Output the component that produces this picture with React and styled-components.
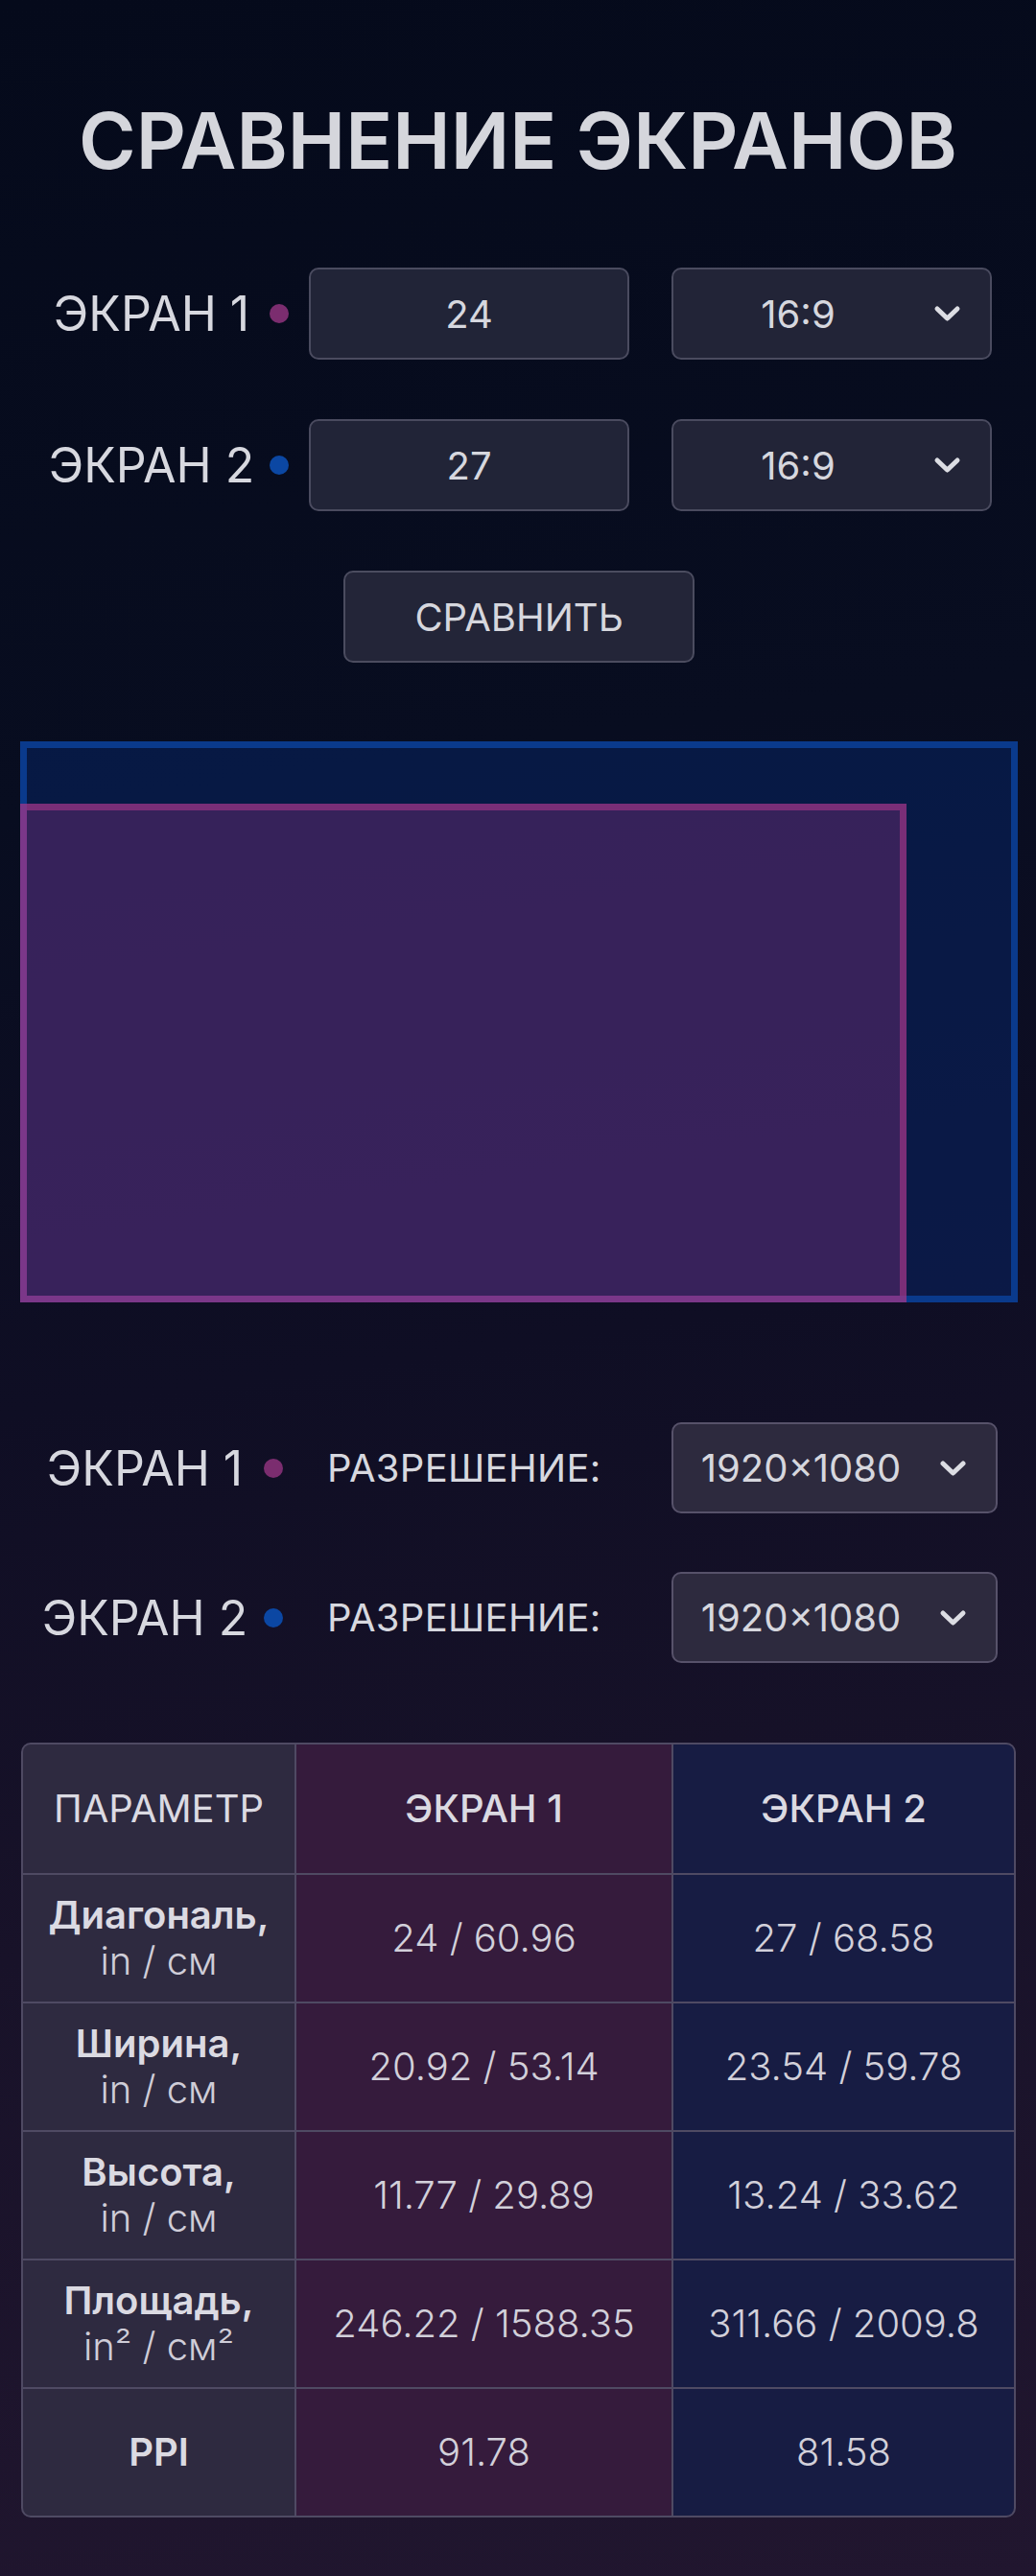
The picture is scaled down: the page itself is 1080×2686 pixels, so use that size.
import React from "react";
import styled, { createGlobalStyle } from "styled-components";

const GlobalStyle = createGlobalStyle`
  html, body {
    margin: 0;
    padding: 0;
  }
  body {
    background: #080c1f;
    font-family: Inter, "Noto Sans", "Liberation Sans", sans-serif;
    color: #d6d7de;
  }
  * {
    box-sizing: border-box;
  }
`;

const Page = styled.div`
  width: 1080px;
  min-height: 2686px;
  padding: 106px 0 61px 0;
  background: linear-gradient(172deg, #050a1b 0%, #080d20 30%, #0f0e24 52%, #181229 72%, #21162f 100%);
  display: flex;
  flex-direction: column;
`;

const Title = styled.h1`
  margin: 0;
  height: 82px;
  font-size: 81px;
  line-height: 82px;
  font-weight: 600;
  text-align: center;
  color: #d5d6dc;
`;

const Form = styled.div`
  margin-top: 91px;
  display: flex;
  flex-direction: column;
  gap: 62px;
`;

const Row = styled.div`
  display: flex;
  align-items: center;
  height: ${(p) => p.$h || 96}px;
  padding: 0 40px;
`;

const LabelText = styled.div`
  width: ${(p) => p.$w}px;
  text-align: center;
  font-size: 50px;
  line-height: 1;
  font-weight: 400;
  color: #d7d8df;
  white-space: nowrap;
`;

const Dot = styled.span`
  flex: none;
  width: 20px;
  height: 20px;
  border-radius: 50%;
  margin-left: ${(p) => p.$ml}px;
  background: ${(p) => (p.$blue ? "#0b47a3" : "#7b2d6f")};
`;

const Field = styled.input`
  width: 334px;
  height: 100%;
  margin-left: ${(p) => p.$ml}px;
  background: #212437;
  border: 2px solid #4a4b5f;
  border-radius: 10px;
  color: #d6d7de;
  font-family: Inter, "Noto Sans", sans-serif;
  font-size: 40px;
  font-weight: 400;
  text-align: center;
  outline: none;
`;

const SelectWrap = styled.div`
  position: relative;
  width: ${(p) => p.$w}px;
  height: 100%;
  margin-left: ${(p) => p.$ml};
`;

const Select = styled.select`
  appearance: none;
  width: 100%;
  height: 100%;
  padding: 0 70px 0 0;
  background: ${(p) => (p.$soft ? "#2d2a3e" : "#222437")};
  border: 2px solid ${(p) => (p.$soft ? "#57526a" : "#4a4b5f")};
  border-radius: 10px;
  color: #d6d7de;
  font-family: Inter, "Noto Sans", sans-serif;
  font-size: 40px;
  font-weight: 400;
  text-align: center;
  text-align-last: center;
  outline: none;
`;

const Chevron = styled.svg`
  position: absolute;
  right: 32px;
  top: 50%;
  margin-top: -9px;
  pointer-events: none;
`;

const ButtonRow = styled.div`
  display: flex;
  justify-content: center;
  padding-left: 2px;
`;

const CompareButton = styled.button`
  width: 366px;
  height: 96px;
  background: #232538;
  border: 2px solid #4b4c5f;
  border-radius: 10px;
  color: #d6d7de;
  font-family: Inter, "Noto Sans", sans-serif;
  font-size: 40px;
  font-weight: 400;
  cursor: pointer;
`;

const Stage = styled.div`
  position: relative;
  margin: 82px 0 0 21px;
  width: 1040px;
  height: 585px;
`;

const BigScreen = styled.div`
  width: 100%;
  height: 100%;
  background: rgba(6, 40, 112, 0.45);
  border: 7px solid #0a3a8c;
`;

const SmallScreen = styled.div`
  position: absolute;
  left: 0;
  bottom: 0;
  background: rgba(101, 44, 111, 0.5);
  border: 7px solid rgba(196, 60, 150, 0.48);
`;

const ResList = styled.div`
  margin-top: 125px;
  display: flex;
  flex-direction: column;
  gap: 61px;
`;

const ParamLabel = styled.div`
  margin-left: 46px;
  font-size: 40px;
  line-height: 1;
  font-weight: 400;
  color: #d7d8df;
  letter-spacing: 0.3px;
`;

const TableBox = styled.div`
  margin: 83px 0 0 22px;
  width: 1037px;
  display: grid;
  grid-template-columns: 283px 391px 355px;
  grid-template-rows: 134px repeat(5, 132px);
  gap: 2px;
  background: #4f4a63;
  border: 2px solid #4f4a63;
  border-radius: 10px;
  overflow: hidden;
`;

const Cell = styled.div`
  display: flex;
  flex-direction: column;
  align-items: center;
  justify-content: center;
  text-align: center;
  background: ${(p) => (p.$col === 1 ? "#351b3c" : p.$col === 2 ? "#171c43" : "#2e2a40")};
  color: #dbdae2;
`;

const HeadText = styled.div`
  font-size: 40px;
  line-height: 1;
  font-weight: ${(p) => (p.$strong ? 500 : 400)};
`;

const ParamName = styled.div`
  font-size: 40px;
  line-height: 48px;
  font-weight: 600;
`;

const ParamUnit = styled.div`
  font-size: 40px;
  line-height: 48px;
  font-weight: 300;
  color: #cfcdd8;
`;

const Value = styled.div`
  font-size: 40px;
  line-height: 1;
  font-weight: 300;
  color: #d2d0da;
`;

const ChevronIcon = () => (
  <Chevron width="29" height="18" viewBox="0 0 29 18">
    <polyline
      points="4,4 14.5,14 25,4"
      fill="none"
      stroke="#dcdde3"
      strokeWidth="5"
      strokeLinecap="round"
      strokeLinejoin="round"
    />
  </Chevron>
);

const screens = [
  { name: "ЭКРАН 1", diag: "24", ratio: "16:9", blue: false },
  { name: "ЭКРАН 2", diag: "27", ratio: "16:9", blue: true },
];

const rows = [
  { name: "Диагональ,", unit: "in / см", a: "24 / 60.96", b: "27 / 68.58" },
  { name: "Ширина,", unit: "in / см", a: "20.92 / 53.14", b: "23.54 / 59.78" },
  { name: "Высота,", unit: "in / см", a: "11.77 / 29.89", b: "13.24 / 33.62" },
  { name: "Площадь,", unit: "in² / см²", a: "246.22 / 1588.35", b: "311.66 / 2009.8" },
  { name: "PPI", a: "91.78", b: "81.58" },
];

export default function App() {
  const scale = 24 / 27;
  return (
    <>
      <GlobalStyle />
      <Page>
        <Title>СРАВНЕНИЕ ЭКРАНОВ</Title>

        <Form>
          {screens.map((s) => (
            <Row key={s.name}>
              <LabelText $w={236}>{s.name}</LabelText>
              <Dot $ml={5} $blue={s.blue} />
              <Field $ml={21} defaultValue={s.diag} />
              <SelectWrap $w={334} $ml="44px">
                <Select defaultValue={s.ratio}>
                  <option>16:9</option>
                  <option>16:10</option>
                  <option>21:9</option>
                  <option>4:3</option>
                </Select>
                <ChevronIcon />
              </SelectWrap>
            </Row>
          ))}
          <ButtonRow>
            <CompareButton>СРАВНИТЬ</CompareButton>
          </ButtonRow>
        </Form>

        <Stage>
          <BigScreen />
          <SmallScreen
            style={{ width: `${scale * 100}%`, height: `${scale * 100}%` }}
          />
        </Stage>

        <ResList>
          {screens.map((s) => (
            <Row key={s.name} $h={95}>
              <LabelText $w={222}>{s.name}</LabelText>
              <Dot $ml={13} $blue={s.blue} />
              <ParamLabel>РАЗРЕШЕНИЕ:</ParamLabel>
              <SelectWrap $w={340} $ml="auto">
                <Select $soft defaultValue="1920×1080">
                  <option>1920×1080</option>
                  <option>2560×1440</option>
                  <option>3840×2160</option>
                </Select>
                <ChevronIcon />
              </SelectWrap>
            </Row>
          ))}
        </ResList>

        <TableBox>
          <Cell>
            <HeadText>ПАРАМЕТР</HeadText>
          </Cell>
          <Cell $col={1}>
            <HeadText $strong>ЭКРАН 1</HeadText>
          </Cell>
          <Cell $col={2}>
            <HeadText $strong>ЭКРАН 2</HeadText>
          </Cell>
          {rows.map((r) => (
            <React.Fragment key={r.name}>
              <Cell>
                <ParamName>{r.name}</ParamName>
                {r.unit && <ParamUnit>{r.unit}</ParamUnit>}
              </Cell>
              <Cell $col={1}>
                <Value>{r.a}</Value>
              </Cell>
              <Cell $col={2}>
                <Value>{r.b}</Value>
              </Cell>
            </React.Fragment>
          ))}
        </TableBox>
      </Page>
    </>
  );
}
